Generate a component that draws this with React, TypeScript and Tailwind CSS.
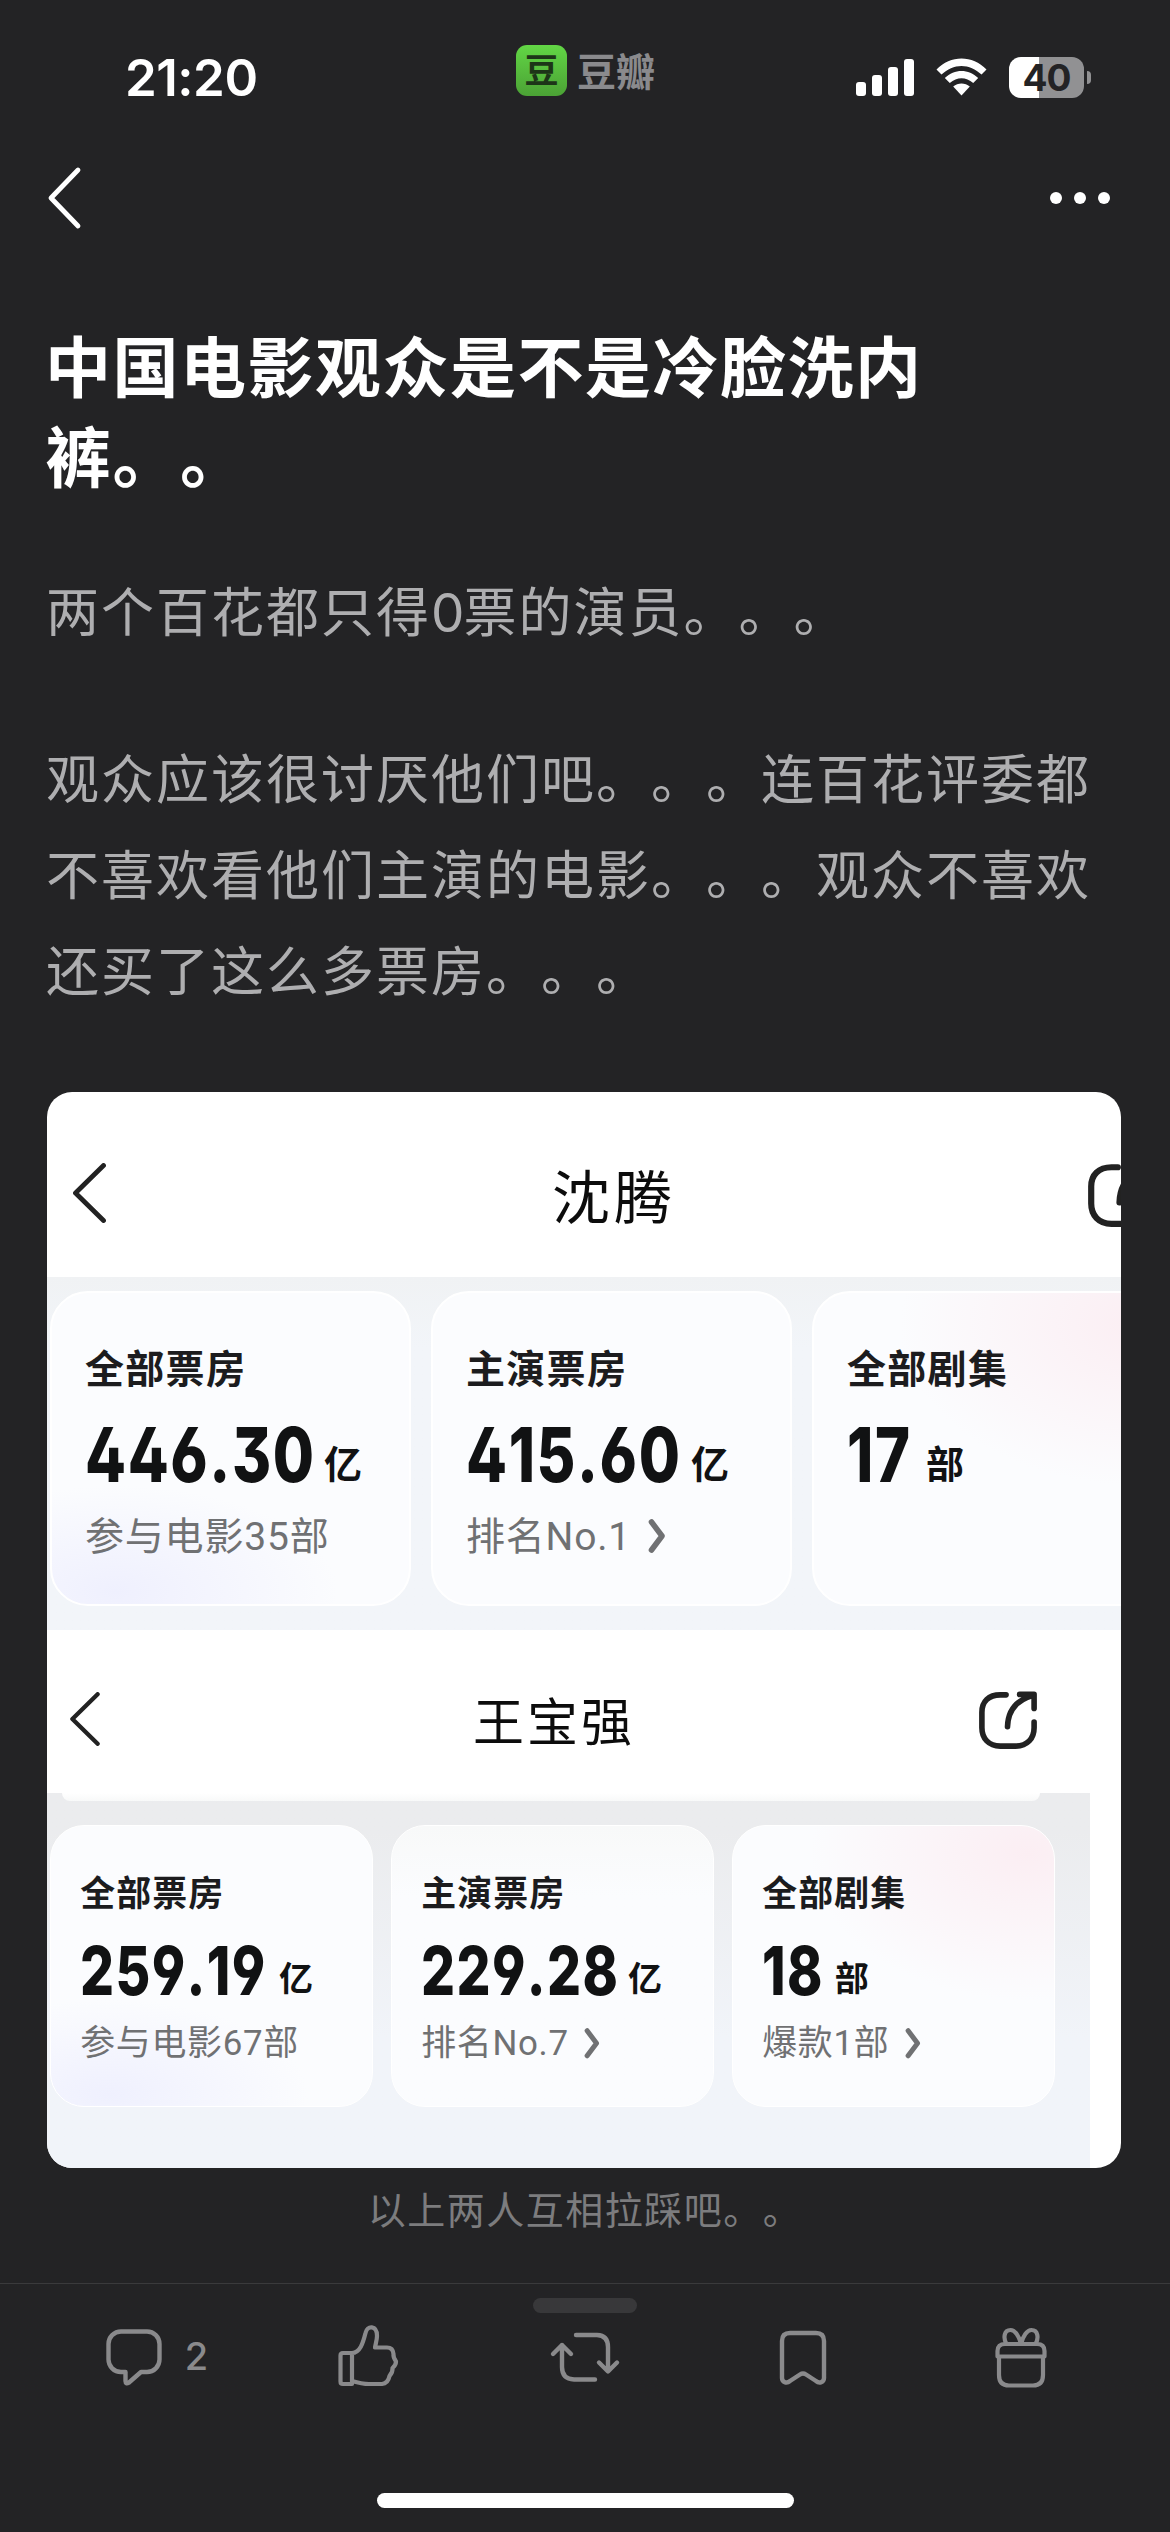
import React from 'react';
import clsx from 'clsx';

type Stat = {
  label: string;
  value: string;
  unit: string;
  // width kept for the figure, so that the unit sits right behind it
  width: number;
  note?: string;
  arrow?: boolean;
  tint?: 'blue' | 'pink';
};

const shenTeng: Stat[] = [
  { label: '全部票房', value: '446.30', unit: '亿', width: 225, note: '参与电影35部', tint: 'blue' },
  { label: '主演票房', value: '415.60', unit: '亿', width: 211, note: '排名No.1', arrow: true },
  { label: '全部剧集', value: '17', unit: '部', width: 65, tint: 'pink' },
];

const wangBaoqiang: Stat[] = [
  { label: '全部票房', value: '259.19', unit: '亿', width: 208, note: '参与电影67部', tint: 'blue' },
  { label: '主演票房', value: '229.28', unit: '亿', width: 217, note: '排名No.7', arrow: true },
  { label: '全部剧集', value: '18', unit: '部', width: 67, note: '爆款1部', arrow: true, tint: 'pink' },
];

function StatusBar() {
  return (
    <div className="relative flex h-[130px] items-start justify-between pl-[125px] pr-[79px]">
      <span className="mt-[46px] font-['Inter'] text-[51px] font-semibold leading-[64px] tracking-[-0.5px] text-white">21:20</span>
      <div className="absolute left-[516px] top-[45px] flex items-center gap-[10px]">
        <span className="flex h-[51px] w-[51px] items-center justify-center rounded-[11px] bg-linear-to-b from-[#62d645] to-[#4ba235]">
          <span className="mt-[-4px] text-[34px] font-bold leading-[51px] text-[#1d3518]">豆</span>
        </span>
        <span className="mt-[-3px] text-[39px] font-bold leading-[51px] text-[#8a8a8d]">豆瓣</span>
      </div>
      <div className="mt-[57px] flex items-start">
        <svg className="mt-[2px]" width="58" height="38" viewBox="0 0 58 38" fill="#fff">
          <rect x="0" y="23" width="10" height="14" rx="3" />
          <rect x="16" y="16" width="10" height="21" rx="3" />
          <rect x="32" y="8" width="10" height="29" rx="3" />
          <rect x="48" y="0" width="10" height="37" rx="3" />
        </svg>
        <svg className="ml-[22px] mt-[1px]" width="51" height="38" viewBox="0 0 51 38" fill="#fff">
          <path d="M0.5 11.5C14.5-3.3 36.5-3.3 50.5 11.5L45.5 16.6C34 5 17 5 5.5 16.6Z" />
          <path d="M8.8 20C18.5 10.5 32.5 10.5 42.2 20L37.2 25C30 18.6 21 18.6 13.8 25Z" />
          <path d="M17.2 28.5C22 24.6 29 24.6 33.8 28.5L25.5 37.5Z" />
        </svg>
        <div className="ml-[22px] flex items-center">
          <div className="flex h-[41px] w-[75px] items-center justify-center rounded-[12px] bg-linear-to-r from-white from-40% to-[#919193] to-40%">
            <span className="font-['Inter'] text-[37px] font-bold leading-[41px] tracking-[-1px] text-[#232325]">40</span>
          </div>
          <span className="ml-[3px] h-[13px] w-[4px] rounded-r-full bg-[#919193]" />
        </div>
      </div>
    </div>
  );
}

function NavBar() {
  return (
    <div className="flex h-[136px] items-center justify-between pl-[46px] pr-[60px]">
      <svg width="36" height="64" viewBox="0 0 36 64" fill="none" stroke="#fff" strokeWidth="4.8" strokeLinecap="round" strokeLinejoin="round">
        <path d="M32 4L5 32L32 60" />
      </svg>
      <div className="flex gap-[12px]">
        <span className="h-[12px] w-[12px] rounded-full bg-white" />
        <span className="h-[12px] w-[12px] rounded-full bg-white" />
        <span className="h-[12px] w-[12px] rounded-full bg-white" />
      </div>
    </div>
  );
}

function BackArrow({ className }: { className?: string }) {
  return (
    <svg className={className} viewBox="0 0 33 60" fill="none" stroke="#222" strokeWidth="4.8" strokeLinecap="round" strokeLinejoin="round">
      <path d="M30.5 2.5L2.5 30L30.5 57.5" />
    </svg>
  );
}

function ShareIcon({ className }: { className?: string }) {
  return (
    <svg className={className} viewBox="0 0 60 60" fill="none" stroke="#222" strokeWidth="5.8" strokeLinecap="round" strokeLinejoin="round">
      <path d="M28 4H22C10 4 3 11 3 22V38C3 49 10 57 22 57H38C50 57 57 49 57 38V32" />
      <path d="M42 3.5H57V18M56 4.5C40 9 30 19 29.5 37" />
    </svg>
  );
}

function StatCard({ stat, shaded }: { stat: Stat; shaded?: boolean }) {
  return (
    <div
      className={clsx(
        'h-[315px] w-[361px] shrink-0 rounded-[38px] border-2 border-white pl-[33px] pt-[48px]',
        shaded && !stat.tint && 'bg-linear-to-b from-[#f8f9f9] to-[#fbfcfe] to-25%',
        !shaded && !stat.tint && 'bg-[#fbfcfe]',
        stat.tint === 'blue' && 'bg-[#fbfcfe] bg-[radial-gradient(ellipse_62%_34%_at_18%_96%,#eff0fe,#fbfcfe)]',
        stat.tint === 'pink' && 'bg-[#fbfcfe] bg-[radial-gradient(ellipse_68%_52%_at_92%_10%,#fbeef3,#fbfcfe)]'
      )}
    >
      <div className="text-[39px] font-bold leading-[50px] tracking-[1.3px] text-[#1c1c1e]">{stat.label}</div>
      <div className="mt-[24px] flex h-[72px] items-end">
        <div className="shrink-0" style={{ width: stat.width }}>
          <span className="inline-block origin-left scale-x-[0.785] font-['Inter'] text-[76px] font-extrabold leading-[64px] tracking-[2px] text-[#111213] [font-feature-settings:'cv02','cv03','cv04','cv09'] [font-kerning:none]">
            {stat.value}
          </span>
        </div>
        <span className="ml-[14px] text-[38px] font-bold leading-[50px] text-[#111213]">{stat.unit}</span>
      </div>
      {stat.note && (
        <div className="mt-[25px] flex items-center">
          <span className="font-['Roboto','Noto_Sans_CJK_SC',sans-serif] text-[39px] leading-[50px] tracking-[0.8px] text-[#707173]">{stat.note}</span>
          {stat.arrow && (
            <svg className="ml-[17px] mt-[-2px]" width="18" height="34" viewBox="0 0 18 34" fill="none" stroke="#707173" strokeWidth="5.6" strokeLinecap="round" strokeLinejoin="round">
              <path d="M3.5 3L14 17L3.5 31" />
            </svg>
          )}
        </div>
      )}
    </div>
  );
}

function BoxOfficeImage() {
  return (
    <div className="mt-[76px] h-[1076px] w-[1074px] overflow-hidden rounded-[25px] bg-white">
      <div className="flex h-[185px] items-center">
        <BackArrow className="ml-[26px] mt-[16px] h-[60px] w-[33px] shrink-0" />
        <h2 className="ml-[446px] mt-[18px] w-[140px] shrink-0 text-[58px] leading-[70px] tracking-[4px] text-[#0c0c0c]">沈腾</h2>
        <ShareIcon className="ml-[396px] mt-[20px] h-[64px] w-[64px] shrink-0" />
      </div>
      <div className="flex h-[353px] gap-[20px] bg-linear-to-b from-[#f0f2f4] to-[#f2f5f9] to-20% pl-[3px] pt-[14px]">
        {shenTeng.map((stat) => (
          <StatCard key={stat.label} stat={stat} />
        ))}
      </div>

      <div className="flex h-[163px] items-center">
        <BackArrow className="ml-[23px] mt-[14px] h-[54px] w-[30px] shrink-0" />
        <h2 className="ml-[373px] mt-[15px] w-[180px] shrink-0 text-[51px] leading-[60px] tracking-[3px] text-[#0c0c0c]">王宝强</h2>
        <ShareIcon className="ml-[326px] mt-[16px] h-[58px] w-[58px] shrink-0" />
      </div>
      <div className="h-[375px] w-[1043px] bg-linear-to-b from-[#ebecee] from-10% to-[#f1f4f9] to-65%">
        <div className="ml-[15px] h-[8px] w-[978px] rounded-b-[16px] bg-linear-to-b from-white to-[#f8f9f9]" />
        <div className="flex gap-[20px] pl-[3px] pt-[27px] [zoom:0.895]">
          {wangBaoqiang.map((stat) => (
            <StatCard key={stat.label} stat={stat} shaded />
          ))}
        </div>
      </div>
    </div>
  );
}

function ActionBar() {
  return (
    <footer className="mt-[50px] h-[249px] border-t border-[#3a3a3c]">
      <div className="mx-auto mt-[14px] h-[15px] w-[104px] rounded-full bg-[#38383a]" />
      <div className="mt-[-2px] flex h-[90px] items-center px-[40px] text-[#8a8a8c]">
        <div className="flex w-[218px] items-center justify-center gap-[21px] pl-[14px]">
          <svg width="60" height="70" viewBox="0 0 60 70" fill="none" stroke="currentColor" strokeWidth="4.4" strokeLinejoin="round">
            <path d="M17 10.5H43A12.5 12.5 0 0 1 55.5 23V38.5A12.5 12.5 0 0 1 43 51H37L25 61.5Q21.5 63.5 21.5 60V51H17A12.5 12.5 0 0 1 4.5 38.5V23A12.5 12.5 0 0 1 17 10.5Z" />
          </svg>
          <span className="font-['Inter'] text-[38px] font-medium leading-[50px]">2</span>
        </div>
        <div className="flex w-[218px] justify-center">
          <svg width="64" height="70" viewBox="0 0 64 70" fill="none" stroke="currentColor" strokeWidth="4.2" strokeLinejoin="round">
            <path d="M17 32H8Q5.5 32 5.5 34.5V60.5Q5.5 63 8 63H17ZM17 32C25 32 28 22 30.5 12C32 4 42 4 42 15C42 19 40.5 23 40 26.5H52Q58 26.5 58.5 33Q58 36 61 40.5Q61 44 57.5 47Q58 51 54.5 55Q53 62.5 47 63H34C27 63 22 61.5 17 60" />
          </svg>
        </div>
        <div className="flex w-[218px] justify-center">
          <svg width="76" height="70" viewBox="0 0 76 70" fill="none" stroke="currentColor" strokeWidth="4.4" strokeLinecap="round" strokeLinejoin="round">
            <path d="M29 14H50Q61 14.5 61 26V50M52 41.5L61 50.5L70 41.5" />
            <path d="M48 58.5H27Q15 58 15 46V24M6 33L15 24L24 33" />
          </svg>
        </div>
        <div className="flex w-[218px] justify-center">
          <svg width="50" height="70" viewBox="0 0 50 70" fill="none" stroke="currentColor" strokeWidth="4.4" strokeLinejoin="round">
            <path d="M12 12H38Q46 12 46 20V57C46 61 41.5 63 38 60L28 53.5Q25 51.5 22 53.5L12 60C8.5 63 4 61 4 57V20Q4 12 12 12Z" />
          </svg>
        </div>
        <div className="flex w-[218px] justify-center">
          <svg width="56" height="70" viewBox="0 0 56 70" fill="none" stroke="currentColor" strokeWidth="4.2" strokeLinejoin="round">
            <path d="M12 23H44Q51.5 23 51.5 30V35.5H4.5V30Q4.5 23 12 23Z" />
            <path d="M6 35.5V54Q6 64.5 16 64.5H40Q50 64.5 50 54V35.5" />
            <path d="M28 23C26 15 22 9 17.5 9C11 9 10 17 13.5 23M28 23C30 15 34 9 38.5 9C45 9 46 17 42.5 23" />
          </svg>
        </div>
      </div>
      <div className="mx-auto mt-[92px] h-[15px] w-[417px] rounded-full bg-white" />
    </footer>
  );
}

export default function App() {
  return (
    <div lang="zh-CN" className="h-[2532px] w-[1170px] overflow-hidden bg-[#232325] font-['Noto_Sans_CJK_SC',sans-serif] [text-spacing-trim:space-all]">
      <StatusBar />
      <NavBar />
      <main className="px-[47px] pt-[52px]">
        <h1 className="ml-[-2px] whitespace-nowrap text-[66px] font-bold leading-[90px] tracking-[1.5px] text-white">
          中国电影观众是不是冷脸洗内
          <br />
          裤。。
        </h1>
        <div className="ml-[-1px] whitespace-nowrap text-[53px] leading-[96px] tracking-[2px] text-[#aeaeb0]">
          <p className="mt-[63px]">
            两个百花都只得<span className="font-['Inter'] leading-none tracking-[-1px]">0</span>票的演员。。。
          </p>
          <p className="mt-[71px]">
            观众应该很讨厌他们吧。。。连百花评委都
            <br />
            不喜欢看他们主演的电影。。。观众不喜欢
            <br />
            还买了这么多票房。。。
          </p>
        </div>
        <BoxOfficeImage />
        <p className="mt-[15px] text-center text-[38px] leading-[50px] tracking-[1.5px] text-[#7c7c7e]">以上两人互相拉踩吧。。</p>
      </main>
      <ActionBar />
    </div>
  );
}
